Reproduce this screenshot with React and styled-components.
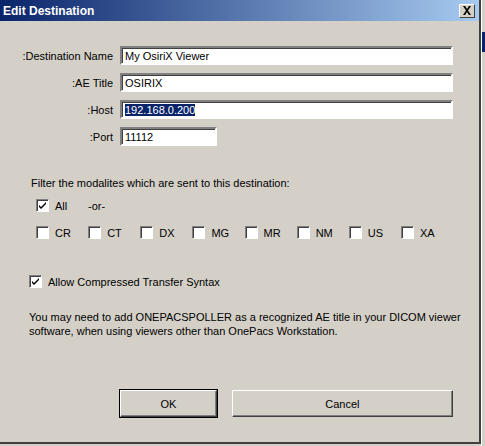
import React from "react";
import styled, { createGlobalStyle } from "styled-components";

const G = createGlobalStyle`
  html,body{margin:0;padding:0;background:#d4d0c8;width:485px;height:446px;overflow:hidden;}
  *{box-sizing:border-box;}
`;
const Screen = styled.div`display:flex;width:485px;height:446px;background:#d4d0c8;`;
const Win = styled.div`
  width:481px;height:444px;background:#d4d0c8;display:flex;flex-direction:column;
  border-right:2px solid #404040;border-bottom:2px solid #404040;
  font-family:Tahoma,"Liberation Sans",Arial,sans-serif;font-size:11px;color:#000;
`;
const Side = styled.div`flex:1;background:#d4d0c8;border-left:1px solid #fff;display:flex;flex-direction:column;`;
const SideBlue = styled.div`margin-top:32px;height:20px;background:#0a246a;`;
const Title = styled.div`
  height:21px;display:flex;align-items:center;justify-content:space-between;padding:0 4px 0 3px;
  background:linear-gradient(to right,#0a246a,#a6caf0);color:#fff;font-weight:bold;font-size:12px;
`;
const Close = styled.div`
  width:16px;height:14px;background:#d4d0c8;display:flex;align-items:center;justify-content:center;
  border:1px solid;border-color:#fff #404040 #404040 #fff;
`;
const Body = styled.div`display:flex;flex-direction:column;padding:25px 26px 0 29px;flex:1;`;
const Grid = styled.div`display:grid;grid-template-columns:84px 1fr;column-gap:7px;row-gap:8px;align-items:center;`;
const Label = styled.div`text-align:right;white-space:nowrap;direction:rtl;font-size:11px;`;
const Input = styled.div`
  height:19px;width:${p=>p.w||"100%"};background:#fff;padding:2px 3px;white-space:nowrap;
  border:2px solid;border-color:#808080 #fff #fff #808080;box-shadow:inset 1px 1px 0 #404040;
  font-size:11px;line-height:13px;
`;
const Sel = styled.span`background:#0a246a;color:#fff;`;
const Filter = styled.div`margin:31px 0 0 2px;font-size:11px;`;
const Row = styled.div`display:flex;align-items:center;margin:${p=>p.m};`;
const Check = styled.label`display:flex;align-items:center;gap:6px;width:${p=>p.w||"auto"};font-size:11px;`;
const Box = styled.span`
  width:13px;height:13px;background:#fff;display:flex;align-items:center;justify-content:center;
  border:1px solid;border-color:#808080 #fff #fff #808080;box-shadow:inset 1px 1px 0 #404040;
`;
const Note = styled.div`margin-top:22px;font-size:11px;line-height:14px;white-space:nowrap;`;
const Buttons = styled.div`display:flex;gap:15px;margin:auto 0 25px 91px;`;
const Btn = styled.div`
  width:${p=>p.w}px;height:27px;display:flex;align-items:center;justify-content:center;font-size:11px;
  border:1px solid;border-color:#fff #404040 #404040 #fff;box-shadow:inset -1px -1px 0 #808080;
  ${p=>p.def&&"outline:1px solid #000;"}
`;
const Tick = () => (
  <svg width="9" height="9" viewBox="0 0 9 9"><path d="M1 4l2 2 5-5v2L3 8 1 6z" fill="#000"/></svg>
);
const CB = ({checked,children,w}) => (
  <Check w={w}><Box>{checked && <Tick/>}</Box>{children}</Check>
);

export default function App(){
  const mods=["CR","CT","DX","MG","MR","NM","US","XA"];
  return (<Screen><G/>
    <Win>
      <Title>Edit Destination
        <Close><svg width="10" height="9" viewBox="0 0 10 9"><path d="M1 0h2l2 3 2-3h2L6 4.5 9 9H7L5 6 3 9H1l3-4.5z" fill="#000"/></svg></Close>
      </Title>
      <Body>
        <Grid>
          <Label>Destination Name:</Label><Input>My OsiriX Viewer</Input>
          <Label>AE Title:</Label><Input>OSIRIX</Input>
          <Label>Host:</Label><Input><Sel>192.168.0.200</Sel></Input>
          <Label>Port:</Label><Input w="97px">11112</Input>
        </Grid>
        <Filter>Filter the modalites which are sent to this destination:</Filter>
        <Row m="10px 0 0 7px"><CB checked w="52px">All</CB><span>-or-</span></Row>
        <Row m="14px 0 0 7px">{mods.map(m=><CB key={m} w="53.5px">{m}</CB>)}</Row>
        <Row m="36px 0 0 0"><CB checked>Allow Compressed Transfer Syntax</CB></Row>
        <Note>You may need to add ONEPACSPOLLER as a recognized AE title in your DICOM viewer<br/>software, when using viewers other than OnePacs Workstation.</Note>
        <Buttons><Btn w={97} def>OK</Btn><Btn w={222}>Cancel</Btn></Buttons>
      </Body>
    </Win>
    <Side><SideBlue/></Side>
  </Screen>);
}
